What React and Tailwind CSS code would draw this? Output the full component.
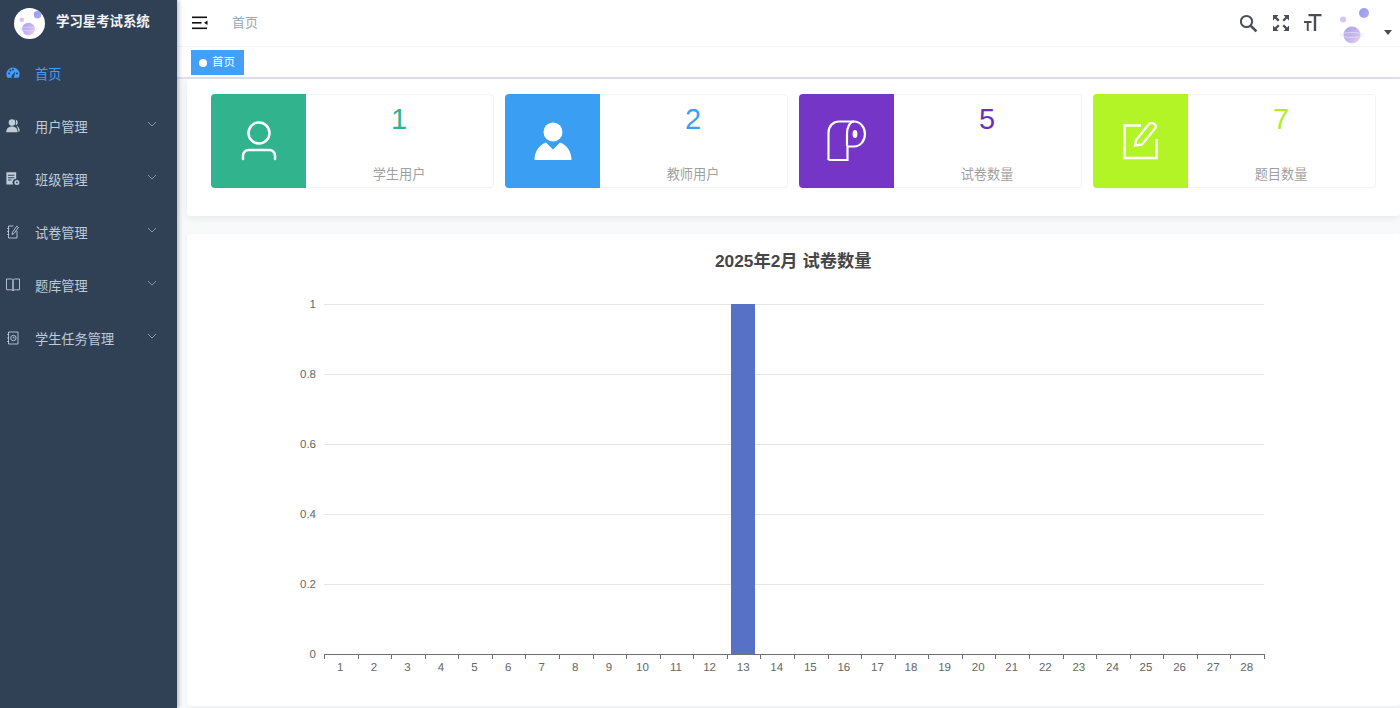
import React from "react";

const FONT = { fontFamily: '"Liberation Sans","Noto Sans CJK SC",sans-serif' };

function Planets({ size = 30, id = "a", cy = 29 }) {
  return (
    <svg width={size} height={size} viewBox="0 0 40 40">
      <defs>
        <linearGradient id={id + "pg"} x1="0" y1="0" x2="1" y2="1">
          <stop offset="0" stopColor="#a9a0ec" />
          <stop offset="0.6" stopColor="#c9b8ee" />
          <stop offset="1" stopColor="#f2d6dc" />
        </linearGradient>
        <linearGradient id={id + "pb"} x1="0" y1="0" x2="1" y2="1">
          <stop offset="0" stopColor="#8f9df0" />
          <stop offset="1" stopColor="#b8a8ec" />
        </linearGradient>
      </defs>
      <circle cx="18" cy={cy} r="8.500" fill={`url(#${id}pg)`} />
      <ellipse cx="18" cy={cy} rx="11.500" ry="2.400" fill="none" stroke="#e6e0f4" strokeWidth="0.8" />
      <circle cx="30" cy="9" r="5" fill={`url(#${id}pb)`} />
      <circle cx="9" cy="15.500" r="3" fill="#dcc2ef" />
    </svg>
  );
}

const Dash = () => (
  <svg width="14" height="14" viewBox="0 0 14 14" fill="currentColor">
    <path d="M7 1.600A6.600 6.600 0 0 0 .4 8.200c0 1.400.4 2.600 1.100 3.600h11c.7-1 1.100-2.200 1.100-3.600A6.600 6.600 0 0 0 7 1.600Zm-3.900 6.900a1 1 0 1 1 0-2 1 1 0 0 1 0 2Zm1.300-3a1 1 0 1 1 0-2 1 1 0 0 1 0 2Zm2.600-1a1 1 0 1 1 0-2 1 1 0 0 1 0 2Zm.9 6.400a1.300 1.300 0 1 1-2-1.500l2.900-3.400.5.300-1.400 4.600Zm3-2.400a1 1 0 1 1 0-2 1 1 0 0 1 0 2Z" fillRule="evenodd" />
  </svg>
);
const Users = () => (
  <svg width="14" height="14" viewBox="0 0 14 14" fill="currentColor">
    <circle cx="6" cy="3.600" r="3.300" />
    <path d="M.2 13.200c0-3.600 2-5.800 5.800-5.800s5.600 2.200 5.600 5.800Z" />
    <path d="M9.600.5a3.200 3.200 0 0 1 .6 5.800l-.6-.5c.7-1.600.6-3.600 0-5.300Zm1 6.600c1.900.4 3.100 2.600 3.200 5.500h-1.500c-.1-2.200-.7-3.900-1.700-5.500Z" />
  </svg>
);
const ClassI = () => (
  <svg width="14" height="14" viewBox="0 0 14 14" fill="currentColor">
    <path fillRule="evenodd" d="M.4.2h9.800v6.600a3.600 3.600 0 0 0-3 5.800H.4ZM2 2.800v1h6.400v-1Zm0 2.400v1h6.400v-1Zm0 2.400v1h3.600v-1Z" />
    <path fillRule="evenodd" d="M10.900 7.900a2.500 2.500 0 1 0 0 5 2.500 2.500 0 0 0 0-5Zm0 1.600a.9.900 0 1 1 0 1.800.9.900 0 0 1 0-1.800Z" />
  </svg>
);
const Paper = () => (
  <svg width="14" height="14" viewBox="0 0 14 14" fill="none" stroke="currentColor" strokeWidth="0.9">
    <path d="M7.500 1H2.500v12h8.500V6" />
    <path d="M1.200 3.500h2M1.200 6.500h2M1.200 9.500h2" />
    <path d="m6 9.500.5-2.200L10.700 1.200l1.700 1.200-4.200 6Z" />
  </svg>
);
const Book = () => (
  <svg width="14" height="14" viewBox="0 0 14 14" fill="none" stroke="currentColor" strokeWidth="0.9">
    <path d="M.5 1h5c.9 0 1.500.5 1.500 1.300v10.500c0-.6-.6-1-1.500-1h-5Z" />
    <path d="M13.500 1h-5c-.9 0-1.500.5-1.500 1.300v10.500c0-.6.600-1 1.500-1h5Z" />
  </svg>
);
const Task = () => (
  <svg width="14" height="14" viewBox="0 0 14 14" fill="none" stroke="currentColor" strokeWidth="0.9">
    <path d="M2.500 1h9.500v12H2.500Z" />
    <path d="M1.200 3.500h2M1.200 7h2M1.200 10.500h2" />
    <circle cx="7.400" cy="7" r="2.700" />
    <path d="M7.400 5.600V7h1.200" />
  </svg>
);
const Chev = () => (
  <svg width="10" height="6" viewBox="0 0 10 6" fill="none" stroke="#8593a5" strokeWidth="1">
    <path d="m1 1 4 4 4-4" />
  </svg>
);

const menus = [
  ["用户管理", Users],
  ["班级管理", ClassI],
  ["试卷管理", Paper],
  ["题库管理", Book],
  ["学生任务管理", Task],
];

function Sidebar() {
  return (
    <aside className="w-[177px] shrink-0 h-[708px] bg-[#304156] shadow-[2px_0_4px_rgba(0,21,41,0.25)] relative z-10">
      <div className="h-[46px] flex items-center pl-[14px] mb-[2px]">
        <div className="w-[31px] h-[31px] rounded-full bg-white flex items-center justify-center overflow-hidden">
          <Planets size={30} id="logo" cy={28} />
        </div>
        <span className="ml-[11px] -mt-[3px] text-[13.400px] leading-[18px] font-bold text-[#f2f4f6]">学习星考试系统</span>
      </div>
      <div className="h-[53px] flex items-center text-[#409eff]">
        <span className="w-[14px] ml-[6px] flex -mt-[3px]"><Dash /></span>
        <span className="ml-[15px] text-[13.200px]">首页</span>
      </div>
      {menus.map(([t, I]) => (
        <div key={t} className="h-[53px] flex items-center text-[#bfcbd9] relative">
          <span className="w-[14px] ml-[6px] flex -mt-[3px]"><I /></span>
          <span className="ml-[15px] text-[13.200px]">{t}</span>
          <span className="absolute left-[147px] top-[20px] flex"><Chev /></span>
        </div>
      ))}
    </aside>
  );
}

function TopBar() {
  return (
    <div className="h-[47px] bg-white border-b border-[#f2f3f5] flex items-center">
      <svg className="ml-[15px]" width="16" height="14" viewBox="0 0 16 14" fill="#111">
        <rect x="0" y="0.500" width="15" height="1.600" />
        <rect x="0" y="6" width="9.500" height="1.600" />
        <rect x="0" y="11.500" width="15" height="1.600" />
        <path d="m15.500 4.600-3.500 2.200 3.500 2.200Z" />
      </svg>
      <span className="ml-[24px] text-[13px] text-[#97a8be]">首页</span>
      <div className="ml-auto flex items-center h-full relative pr-[8px]">
        <svg width="19" height="19" viewBox="0 0 19 19" fill="none" stroke="#4a4d52" className="mr-[14px]">
          <circle cx="7.500" cy="7.500" r="5.600" strokeWidth="2" />
          <path d="m11.800 11.800 5.600 5.600" strokeWidth="2.600" />
        </svg>
        <svg width="18" height="18" viewBox="0 0 18 18" fill="#4a4d52" className="mr-[14px]">
          <path d="M1 1h5.500L4.600 2.900l3 3-1.700 1.700-3-3L1 6.500ZM17 1v5.500l-1.900-1.900-3 3-1.700-1.700 3-3L11.500 1ZM1 17v-5.500l1.900 1.900 3-3 1.700 1.700-3 3L6.500 17ZM17 17h-5.500l1.900-1.900-3-3 1.700-1.700 3 3 1.900-1.900Z" />
        </svg>
        <svg width="18" height="18" viewBox="0 0 18 18" fill="#4a4d52" className="mr-[12px]">
          <path d="M4.500 0h13v2.200h-5.300V17H9.800V2.200H4.500Z" />
          <path d="M0 7h7.500v1.900H4.700V17H2.800V8.900H0Z" />
        </svg>
        <span className="w-[40px] h-[40px] flex mt-[2px]"><Planets size={40} id="avatar" cy={31} /></span>
        <svg width="8" height="5" viewBox="0 0 8 5" fill="#4a4d52" className="ml-[10px] mt-[19px]">
          <path d="M0 0h8L4 5Z" />
        </svg>
      </div>
    </div>
  );
}

function Tags() {
  return (
    <div className="h-[32px] bg-white border-b-2 border-[#dfe2ee] flex items-start pl-[14px] pt-[3px]">
      <div className="h-[25px] w-[53px] bg-[#42a0f8] text-white text-[11.500px] flex items-center pl-[8px]">
        <span className="w-[8px] h-[8px] rounded-full bg-white mr-[5px]" />
        首页
      </div>
    </div>
  );
}

const UserOutline = () => (
  <svg width="36" height="40" viewBox="0 0 36 40" fill="none" stroke="#fff" strokeWidth="2.500" strokeLinecap="round">
    <circle cx="18" cy="12" r="10.500" />
    <path d="M2 38v-3.500c0-3 2.500-5.500 5.500-5.500h21c3 0 5.500 2.500 5.500 5.500V38" />
  </svg>
);
const UserSolid = () => (
  <svg width="38" height="38" viewBox="0 0 38 38" fill="#fff">
    <circle cx="19" cy="10" r="9.500" />
    <path d="M.5 38c0-9 5-15 11.500-17.500l7 7 7-7C32.500 23 37.500 29 37.500 38Z" />
  </svg>
);
const Roll = () => (
  <svg width="40" height="42" viewBox="0 0 40 42" fill="none" stroke="#fff" strokeWidth="2.200">
    <path d="M1.500 40V13C1.500 6 6 1.500 12 1.500h15" />
    <path d="M1.500 40h19V26" />
    <path d="M27 1.500c6 0 11 5.500 11 12.500s-5 12.500-11 12.500h-6.500" />
    <path d="M27 1.500c-4 0-7 5.500-7 12.500v12" />
    <ellipse cx="28" cy="14" rx="2.400" ry="4" fill="#fff" stroke="none" />
  </svg>
);
const EditI = () => (
  <svg width="36" height="38" viewBox="0 0 36 38" fill="none" stroke="#fff" strokeWidth="2.400">
    <path d="M18 3.500H1.500v32.500h32V17" />
    <path d="m12 23.500 1-5.500L26 2c1.500-1.500 3-1.500 5-.2s2.300 3 1 4.800L19 22.500Z" />
  </svg>
);

const stats = [
  ["学生用户", "1", "#31b48d", "#31b48d", UserOutline],
  ["教师用户", "2", "#3a9ff2", "#3a9ff2", UserSolid],
  ["试卷数量", "5", "#7536c7", "#6a30bd", Roll],
  ["题目数量", "7", "#b2f425", "#b2ec30", EditI],
];

function Stats() {
  return (
    <section className="h-[137px] bg-white rounded-[3px] shadow-[0_2px_8px_rgba(0,0,0,0.07)] pt-[15px] pl-[24px] pr-[24px]">
      <div className="grid grid-cols-4 gap-x-[11px]">
        {stats.map(([label, n, bg, fg, I]) => (
          <div key={label} className="h-[94px] flex rounded-[4px] border border-[#f2f3f5] shadow-[0_1px_2px_rgba(0,0,0,0.02)]">
            <div className="w-[95px] shrink-0 flex items-center justify-center -my-px -ml-px rounded-l-[4px]" style={{ backgroundColor: bg }}>
              <I />
            </div>
            <div className="flex-1 flex flex-col items-center pt-[8px] pr-[1px]">
              <span className="text-[29px] leading-[33px]" style={{ color: fg }}>{n}</span>
              <span className="mt-[30px] text-[13.200px] leading-[18px] text-[#9f9f9f]">{label}</span>
            </div>
          </div>
        ))}
      </div>
    </section>
  );
}

function Chart() {
  const L = 137, R = 1077, T = 70, B = 420;
  const ys = ["1", "0.8", "0.6", "0.4", "0.2", "0"];
  const step = (R - L) / 28;
  const days = Array.from({ length: 28 }, (_, i) => i + 1);
  return (
    <svg width="1213" height="470" viewBox="0 0 1213 470" className="block absolute left-0 top-0 opacity-[0.99]" style={{ fontFamily: '"Liberation Sans",sans-serif', textRendering: "geometricPrecision" }}>
      {ys.map((y, i) => {
        const py = T + (i * (B - T)) / 5;
        return (
          <g key={y}>
            {i < 5 && <line x1={L} x2={R} y1={py + 0.5} y2={py + 0.5} stroke="#e6e6e6" />}
            <text x={L - 8} y={py + 4} textAnchor="end" fontSize="11.500" fill="#666">{y}</text>
          </g>
        );
      })}
      <rect x={544} y={T} width="24" height={B - T} fill="#5470c6" />
      <line x1={L} x2={R} y1={B + 0.5} y2={B + 0.5} stroke="#6e7079" />
      {Array.from({ length: 29 }, (_, i) => (
        <line key={i} x1={Math.round(L + i * step) + 0.5} x2={Math.round(L + i * step) + 0.5} y1={B} y2={B + 5} stroke="#6e7079" />
      ))}
      {days.map((d, i) => (
        <text key={d} x={L + (i + 0.5) * step - 0.5} y={B + 17} textAnchor="middle" fontSize="11.500" fill="#666">{d}</text>
      ))}
    </svg>
  );
}

export default function App() {
  return (
    <div className="w-[1400px] h-[708px] overflow-hidden flex bg-[#f8f9fa]" style={FONT}>
      <Sidebar />
      <main className="flex-1 min-w-0 flex flex-col">
        <TopBar />
        <Tags />
        <div className="pl-[10px] flex-1 flex flex-col gap-[18px]">
          <Stats />
          <section className="h-[472px] bg-white rounded-[3px] shadow-[0_1px_4px_rgba(0,0,0,0.06)] relative">
            <Chart />
            <h2 className="relative pt-[16px] pl-[528px] text-[17.300px] leading-[22px] font-bold text-[#464646]">2025年2月 试卷数量</h2>
          </section>
        </div>
      </main>
    </div>
  );
}
